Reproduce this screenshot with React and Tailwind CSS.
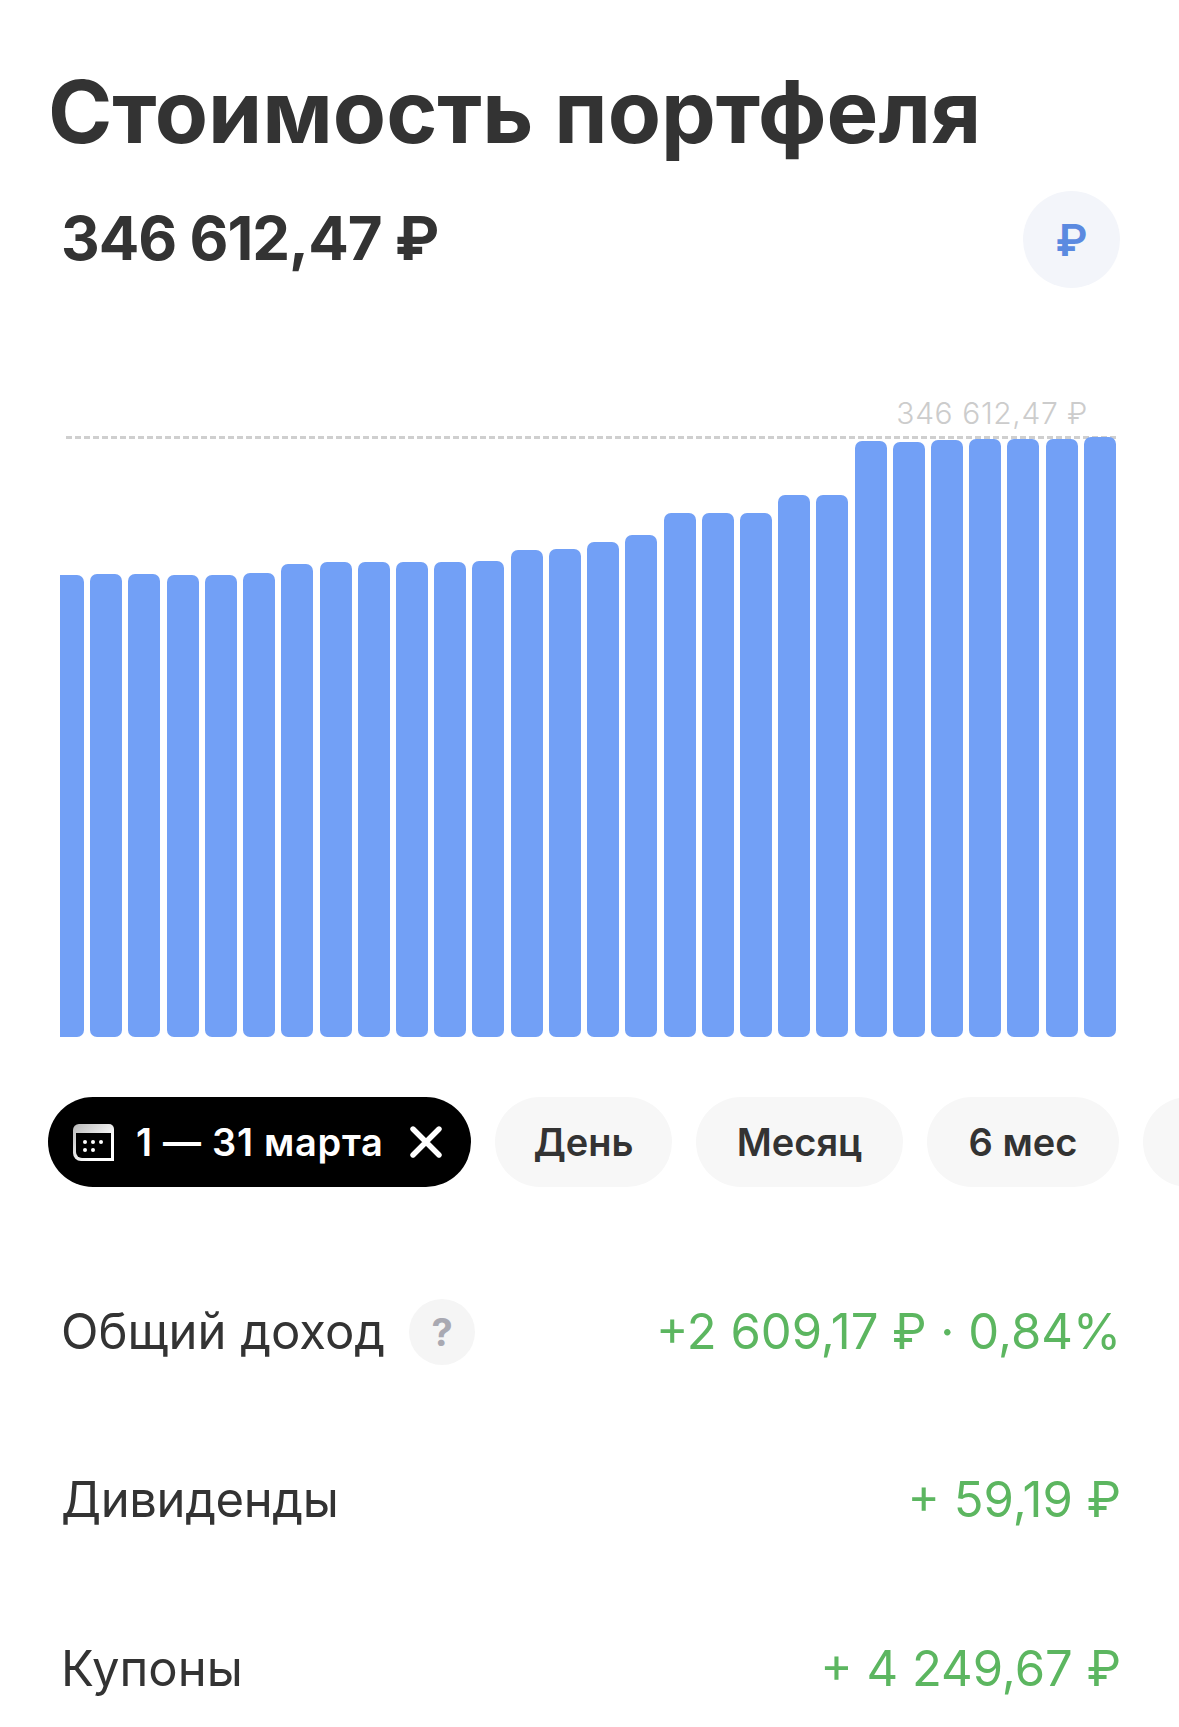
const BAR_TOPS = [575, 574, 574, 575, 575, 573, 564, 562, 562, 562, 562, 561, 550, 549, 542, 535, 513, 513, 513, 495, 495, 441, 442, 440, 439, 439, 439, 437];
const CHART_BOTTOM = 1037;

const CalendarIcon = () => (
  <svg width="41" height="37" viewBox="0 0 41 37" className="shrink-0">
    <defs>
      <linearGradient id="calTop" x1="0" y1="0" x2="1" y2="1">
        <stop offset="0" stopColor="#b9b9b9" />
        <stop offset="0.7" stopColor="#ffffff" />
      </linearGradient>
    </defs>
    <path d="M6 0H36a5 5 0 0 1 5 5V37H8a8 8 0 0 1-8-8V6a6 6 0 0 1 6-6Z" fill="url(#calTop)" />
    <path d="M3 9H38V34H9a6 6 0 0 1-6-6Z" fill="#000" />
    <circle cx="12" cy="18" r="2" fill="#fff" />
    <circle cx="20" cy="18" r="2" fill="#fff" />
    <circle cx="28" cy="18" r="2" fill="#fff" />
    <circle cx="12" cy="26" r="2" fill="#fff" />
    <circle cx="20" cy="26" r="2" fill="#fff" />
  </svg>
);

const CloseIcon = () => (
  <svg width="32" height="32" viewBox="0 0 32 32" className="shrink-0 ml-[26px]">
    <path d="M3 3L29 29M29 3L3 29" stroke="#fff" strokeWidth="5.4" strokeLinecap="round" />
  </svg>
);

const Pill = ({ label, className }) => (
  <div className={`h-[90px] shrink-0 rounded-full bg-[#f7f7f7] flex items-center justify-center text-[38px] font-semibold text-[#333333] ${className}`}>
    {label}
  </div>
);

const Row = ({ label, labelClassName = '', value, children, className }) => (
  <div className={`flex items-center justify-between h-[66px] pl-[61px] pr-[58px] ${className}`}>
    <div className="flex items-center gap-[24px]">
      <span className={`text-[49px] text-[#333333] ${labelClassName}`}>{label}</span>
      {children}
    </div>
    <span className="text-[49px] text-[#5cb660]">{value}</span>
  </div>
);

export default function App() {
  return (
    <div className="w-[1179px] h-[1727px] overflow-hidden bg-white font-['Inter','Noto_Sans',sans-serif]">
      <h1 className="pt-[60px] pl-[48px] text-[87px] leading-[104px] font-bold text-[#333333] whitespace-nowrap">
        Стоимость портфеля
      </h1>

      <div className="flex items-center justify-between mt-[27px] pl-[61px] pr-[59px]">
        <span className="pb-[3px] text-[60px] font-bold tracking-[-1px] text-[#333333]">346 612,47 ₽</span>
        <div className="w-[97px] h-[97px] rounded-full bg-[#f3f5fa] flex items-center justify-center text-[44px] font-semibold text-[#5b8ae0]">
          ₽
        </div>
      </div>

      <div className="relative mt-[95px] h-[654px]">
        <div className="flex justify-end pt-[10px] pr-[91px] text-[30px] leading-[40px] font-light tracking-[0.6px] text-[#cccccc]">
          346 612,47 ₽
        </div>
        <div className="absolute left-[66px] top-[53px] w-[1050px] border-t-[3px] border-dashed border-[#cfcfcf]" />
        <div className="absolute left-[60px] bottom-0 w-[1056px] h-[600px] flex items-end justify-between">
          {BAR_TOPS.map((top, i) => (
            <div
              key={i}
              className={i === 0 ? 'w-[24px] bg-[#72a0f6] rounded-r-[7px]' : 'w-[32px] bg-[#72a0f6] rounded-[7px]'}
              style={{ height: CHART_BOTTOM - top }}
            />
          ))}
        </div>
      </div>

      <div className="flex gap-[24px] mt-[60px] pl-[48px]">
        <div className="h-[90px] w-[423px] shrink-0 rounded-full bg-black flex items-center pl-[25px] text-white">
          <CalendarIcon />
          <span className="ml-[22px] text-[38px] font-semibold tracking-[0.7px] whitespace-nowrap">1 — 31 марта</span>
          <CloseIcon />
        </div>
        <Pill label="День" className="w-[177px]" />
        <Pill label="Месяц" className="w-[207px]" />
        <Pill label="6 мес" className="w-[192px]" />
        <Pill label="" className="w-[100px]" />
      </div>

      <Row label="Общий доход" value="+2 609,17 ₽ · 0,84%" className="mt-[112px]">
        <div className="w-[66px] h-[66px] rounded-full bg-[#f5f5f5] flex items-center justify-center text-[38px] font-bold text-[#a9a9b2]">
          ?
        </div>
      </Row>
      <Row label="Дивиденды" labelClassName="tracking-[-0.4px]" value="+ 59,19 ₽" className="mt-[102px]" />
      <Row label="Купоны" value="+ 4 249,67 ₽" className="mt-[103px]" />
    </div>
  );
}
